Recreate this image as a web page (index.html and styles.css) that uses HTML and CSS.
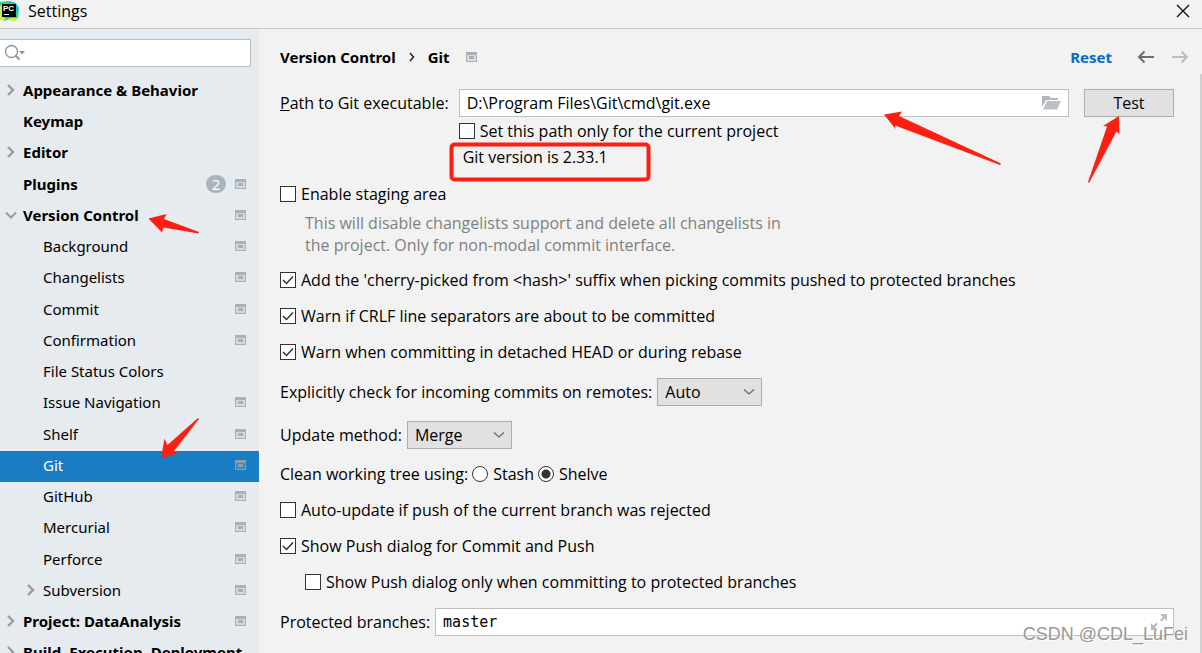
FILE: index.html
```html
<!DOCTYPE html>
<html lang="en">
<head>
<meta charset="utf-8">
<title>Settings</title>
<link rel="stylesheet" href="styles.css">
</head>
<body>
<svg class="defs" aria-hidden="true">
  <symbol id="project" viewBox="0 0 12 12">
    <path fill="currentColor" fill-rule="evenodd" d="M0 1h11v10H0zM1 4v6h9V4z"/>
    <path fill="currentColor" opacity=".3" d="M1 4h9v6H1z"/>
    <path fill="currentColor" d="M3 5h5v3H3z"/>
  </symbol>
  <symbol id="right" viewBox="0 0 12 14"><path d="M3 2l5 5-5 5" fill="none" stroke="#9b9b9b" stroke-width="2.400"/></symbol>
  <symbol id="down" viewBox="0 0 12 14"><path d="M1 4.500l5 5 5-5" fill="none" stroke="#9b9b9b" stroke-width="2"/></symbol>
</svg>

<div class="window">
  <header class="titlebar">
    <svg class="logo" width="20" height="22" viewBox="0 0 20 22" aria-hidden="true">
      <path fill="#21d789" d="M0 2l8-1 8 2 3 5-1 10-5 3-4-2-4 2-5-2z"/>
      <path fill="#c8f04a" d="M0 6l3-2v13l3 2-2 2-4-2zM9 18h8l-1 3-4 0z"/>
      <path fill="#07c3f2" d="M10 1l5 2 3 4-1 5-2-7-6-2z"/>
      <path fill="#000" d="M2 4h14v13H2z"/>
      <path fill="#fff" d="M4 14h5v1H4z"/>
      <text x="3" y="11" class="logo-text">PC</text>
    </svg>
    <h1 class="title">Settings</h1>
    <button class="icon-button close" aria-label="Close">
      <svg width="14" height="14" viewBox="0 0 14 14"><path d="M1 1l12 12M13 1L1 13" stroke="#111" stroke-width="1.400"/></svg>
    </button>
  </header>

  <div class="body">
    <aside class="sidebar">
      <div class="search">
        <svg width="22" height="18" viewBox="0 0 22 18" aria-hidden="true">
          <circle cx="7.500" cy="7.500" r="6" fill="none" stroke="#8a98a2" stroke-width="1.400"/>
          <path d="M11.500 11.500l4 4" stroke="#8a98a2" stroke-width="2"/>
          <path d="M15 7h6l-3 3.500z" fill="#8a98a2"/>
        </svg>
        <input type="text" aria-label="Search settings">
      </div>
      <ul class="tree">
        <li class="row top"><svg class="arrow"><use href="#right"/></svg><span class="name">Appearance &amp; Behavior</span></li>
        <li class="row top"><span class="arrow"></span><span class="name">Keymap</span></li>
        <li class="row top"><svg class="arrow"><use href="#right"/></svg><span class="name">Editor</span></li>
        <li class="row top"><span class="arrow"></span><span class="name">Plugins</span><span class="count">2</span><svg class="mark"><use href="#project"/></svg></li>
        <li class="row top"><svg class="arrow"><use href="#down"/></svg><span class="name">Version Control</span><svg class="mark"><use href="#project"/></svg></li>
        <li class="row sub"><span class="arrow"></span><span class="name">Background</span><svg class="mark"><use href="#project"/></svg></li>
        <li class="row sub"><span class="arrow"></span><span class="name">Changelists</span><svg class="mark"><use href="#project"/></svg></li>
        <li class="row sub"><span class="arrow"></span><span class="name">Commit</span><svg class="mark"><use href="#project"/></svg></li>
        <li class="row sub"><span class="arrow"></span><span class="name">Confirmation</span><svg class="mark"><use href="#project"/></svg></li>
        <li class="row sub"><span class="arrow"></span><span class="name">File Status Colors</span></li>
        <li class="row sub"><span class="arrow"></span><span class="name">Issue Navigation</span><svg class="mark"><use href="#project"/></svg></li>
        <li class="row sub"><span class="arrow"></span><span class="name">Shelf</span><svg class="mark"><use href="#project"/></svg></li>
        <li class="row sub selected" aria-current="page"><span class="arrow"></span><span class="name">Git</span><svg class="mark"><use href="#project"/></svg></li>
        <li class="row sub"><span class="arrow"></span><span class="name">GitHub</span><svg class="mark"><use href="#project"/></svg></li>
        <li class="row sub"><span class="arrow"></span><span class="name">Mercurial</span><svg class="mark"><use href="#project"/></svg></li>
        <li class="row sub"><span class="arrow"></span><span class="name">Perforce</span><svg class="mark"><use href="#project"/></svg></li>
        <li class="row sub"><svg class="arrow"><use href="#right"/></svg><span class="name">Subversion</span><svg class="mark"><use href="#project"/></svg></li>
        <li class="row top"><svg class="arrow"><use href="#right"/></svg><span class="name">Project: DataAnalysis</span><svg class="mark"><use href="#project"/></svg></li>
        <li class="row top"><svg class="arrow"><use href="#right"/></svg><span class="name">Build, Execution, Deployment</span></li>
      </ul>
    </aside>

    <main class="content">
      <div class="heading">
        <h2 class="crumbs"><span>Version Control</span>
          <svg width="8" height="12" viewBox="0 0 8 12" aria-hidden="true"><path d="M2 2l3.500 4L2 10" fill="none" stroke="#222" stroke-width="1.500"/></svg>
          <span>Git</span></h2>
        <svg class="mark"><use href="#project"/></svg>
        <button class="reset">Reset</button>
        <button class="icon-button" aria-label="Back"><svg width="18" height="14" viewBox="0 0 18 14"><path d="M17 7H2M7.500 1.500L2 7l5.500 5.500" fill="none" stroke="#6e6e6e" stroke-width="2"/></svg></button>
        <button class="icon-button" aria-label="Forward" disabled><svg width="18" height="14" viewBox="0 0 18 14"><path d="M1 7h15M10.500 1.500L16 7l-5.500 5.500" fill="none" stroke="#bdbdbd" stroke-width="2"/></svg></button>
      </div>

      <form class="form">
        <div class="path">
          <label for="git-path"><u>P</u>ath to Git executable:</label>
          <div class="field">
            <input id="git-path" type="text" value="D:\Program Files\Git\cmd\git.exe">
            <button type="button" class="icon-button" aria-label="Browse"><svg width="20" height="16" viewBox="0 0 20 16"><path fill="#aeb9c0" d="M0 1h7l2 2h7v2H4L0 12z"/><path fill="#b8c1c7" d="M5 6h14l-4 8.500H1z"/></svg></button>
          </div>
          <button type="button" class="test">Test</button>
          <label class="check under-field"><input type="checkbox">Set this path only for the current project</label>
          <p class="version">Git version is 2.33.1</p>
        </div>

        <label class="check line"><input type="checkbox">Enable staging area</label>
        <p class="help">This will disable changelists support and delete all changelists in<br>the project. Only for non-modal commit interface.</p>
        <label class="check line"><input type="checkbox" checked>Add the 'cherry-picked from &lt;hash&gt;' suffix when picking commits pushed to protected branches</label>
        <label class="check line"><input type="checkbox" checked>Warn if CRLF line separators are about to be committed</label>
        <label class="check line"><input type="checkbox" checked>Warn when committing in detached HEAD or during rebase</label>
        <div class="line tall"><label for="incoming">Explicitly check for incoming commits on remotes:</label>
          <select id="incoming"><option>Auto</option><option>Always</option><option>Never</option></select></div>
        <div class="line tall"><label for="update">Update method:</label>
          <select id="update"><option>Merge</option><option>Rebase</option></select></div>
        <div class="line radios" role="radiogroup" aria-label="Clean working tree using"><span>Clean working tree using:</span>
          <label class="check"><input type="radio" name="clean">Stash</label>
          <label class="check"><input type="radio" name="clean" checked>Shelve</label></div>
        <label class="check line"><input type="checkbox">Auto-update if push of the current branch was rejected</label>
        <label class="check line"><input type="checkbox" checked>Show Push dialog for Commit and Push</label>
        <label class="check line indent"><input type="checkbox">Show Push dialog only when committing to protected branches</label>
        <div class="line tall"><label for="branches">Protected branches:</label>
          <div class="field grow"><input id="branches" class="mono" type="text" value="master">
            <button type="button" class="icon-button" aria-label="Expand"><svg width="16" height="16" viewBox="0 0 16 16"><path fill="#b4bdc3" d="M9 0h7v7l-2.500-2.500L10.500 7.500 9 6l3-3zM0 9l2.500 2.500L5.500 8.500 7 10l-3 3 3 3H0z"/></svg></button></div></div>
      </form>
    </main>
  </div>
</div>

<svg class="notes" width="1202" height="653" viewBox="0 0 1202 653" aria-hidden="true">
  <rect x="451.500" y="144.500" width="197" height="35" rx="3" fill="none" stroke="#ff1f12" stroke-width="4"/>
  <g fill="#ff1f12">
    <path d="M148.500 218.500l18-4.500-2.500 5 35 13-.5 1.500-35-6-1.500 5z"/>
    <path d="M161 458.500l3.500-20 3 6.500 30.500-27 1 1-25 32 4.500 2z"/>
    <path d="M884 114.500l18-3-3 4.500 102 47.500-1 1.500-105-39.500.5 3.500z"/>
    <path d="M1119 116l.5 18.500-3-3-27.500 51.500-1-1 19-55.500-4-.5z"/>
  </g>
</svg>
<div class="watermark">CSDN @CDL_LuFei</div>
</body>
</html>
```
FILE: styles.css
```css
* { box-sizing: border-box; }

body {
  margin: 0;
  height: 100vh;
  overflow: hidden;
  position: relative;
  background: #f2f2f2;
  color: #000;
  font: 16px/22px "Open Sans", "Noto Sans", sans-serif;
}

h1, h2, p, ul { margin: 0; padding: 0; }
h1, h2 { font-size: inherit; }
input, button, select { font: inherit; color: inherit; }
svg { flex: none; }

.defs { position: absolute; width: 0; height: 0; }

.window { display: flex; flex-direction: column; height: 100%; }

.titlebar {
  display: flex;
  align-items: center;
  height: 29px;
  flex: none;
  padding: 0 12px 6px 0;
  border-bottom: 1px solid #c9c9c9;
}
.logo-text { font: bold 8px "Liberation Sans", sans-serif; fill: #fff; }
.title { margin-left: 8px; font-weight: 400; }
.close { margin-left: auto; }

.icon-button {
  display: flex;
  padding: 0;
  border: 0;
  background: none;
}

.body { display: flex; flex: 1; min-height: 0; }

.sidebar {
  width: 259px;
  flex: none;
  overflow: hidden;
  padding-top: 10px;
  background: #e6ebef;
}
.search {
  display: flex;
  align-items: center;
  height: 28px;
  margin-right: 8px;
  padding-left: 4px;
  border: 1px solid #bdbdbd;
  border-left: 0;
  background: #fff;
}
.search input { flex: 1; min-width: 0; border: 0; outline: 0; background: none; }

.tree, .heading { font-family: "Noto Sans", "Open Sans", sans-serif; font-size: 15px; }

.tree {
  display: grid;
  grid-template-columns: minmax(0, 1fr);
  grid-auto-rows: 31px 31px 31px 32px;
  margin-top: 9px;
  list-style: none;
}
.row {
  display: flex;
  align-items: center;
  padding: 0 12px 3px 5px;
  white-space: nowrap;
}
.top { font-weight: 700; }
.sub { padding-left: 25px; }
.arrow { width: 12px; height: 14px; margin-right: 6px; flex: none; }
.name { flex: 1; }
.mark { width: 12px; height: 12px; color: #a6b1b9; }
.selected { background: #1a7dc4; color: #fff; }
.selected .mark { color: #8c9fae; }
.count {
  width: 20px;
  height: 18px;
  margin-right: 9px;
  border-radius: 9px;
  background: #a9b5be;
  color: #fff;
  font-weight: 400;
  line-height: 18px;
  text-align: center;
}

.content {
  flex: 1;
  min-width: 0;
  padding: 0 26px 0 21px;
  border-right: 2px solid transparent;
  border-image: linear-gradient(transparent 45px, #d0d0d0 45px) 0 2 0 0;
}

.heading {
  display: flex;
  align-items: center;
  height: 60px;
  margin-right: -15px;
  padding-bottom: 4px;
}
.crumbs { display: flex; align-items: center; gap: 12px; margin-right: 16px; }
.reset {
  margin: 0 25px 0 auto;
  padding: 0;
  border: 0;
  background: none;
  color: #0a6cc4;
  font-weight: 700;
}
.heading .icon-button + .icon-button { margin-left: 16px; }

.path {
  display: grid;
  grid-template-columns: auto 1fr 90px;
  grid-template-rows: 28px 27px 32px;
  align-items: center;
}
.field {
  display: flex;
  align-items: center;
  height: 28px;
  padding-right: 6px;
  border: 1px solid #c0c0c0;
  background: #fff;
}
.field input {
  flex: 1;
  min-width: 0;
  padding: 0 7px;
  border: 0;
  outline: 0;
  background: none;
}
.path .field { margin: 0 15px 0 10px; }
.test { height: 28px; border: 1px solid #adadad; background: #e1e1e1; }
.under-field { grid-column: 2; margin-left: 10px; }
.version { grid-column: 2; margin: 2px 0 0 14px; align-self: start; }

.check { display: flex; align-items: center; gap: 5px; }
.check input {
  appearance: none;
  width: 16px;
  height: 16px;
  margin: 0;
  flex: none;
  border: 1px solid #333;
  background: #fff center / 14px no-repeat;
}
.check input[type="checkbox"]:checked {
  background-image: url("data:image/svg+xml,%3Csvg xmlns='http://www.w3.org/2000/svg' viewBox='0 0 14 14'%3E%3Cpath d='M2 7l3.500 3.500L12 3.500' fill='none' stroke='%23333' stroke-width='1.500'/%3E%3C/svg%3E");
}
.check input[type="radio"] { border-radius: 50%; }
.check input[type="radio"]:checked { background-image: radial-gradient(circle, #333 4px, transparent 5px); }

.line { display: flex; align-items: center; height: 36px; }
.tall { height: 43px; gap: 5px; }
.radios { gap: 4px; }
.indent { margin-left: 25px; }
.help { margin-left: 25px; padding-bottom: 6px; color: #808080; }
.grow { flex: 1; }
.field .mono { font-family: "DejaVu Sans Mono", monospace; font-size: 15px; }

select {
  appearance: none;
  width: 105px;
  height: 28px;
  padding: 0 7px;
  border: 1px solid #adadad;
  border-radius: 0;
  background: #e1e1e1 url("data:image/svg+xml,%3Csvg xmlns='http://www.w3.org/2000/svg' viewBox='0 0 12 12'%3E%3Cpath d='M1 3.500l5 4.500 5-4.500' fill='none' stroke='%23666' stroke-width='1.200'/%3E%3C/svg%3E") right 6px center / 12px no-repeat;
}

.notes { position: absolute; top: 0; left: 0; pointer-events: none; }
.watermark {
  position: absolute;
  right: 14px;
  bottom: 8px;
  color: #999;
  font: 18px/22px "Liberation Sans", sans-serif;
  text-shadow: 1px 1px #fff;
}
```
